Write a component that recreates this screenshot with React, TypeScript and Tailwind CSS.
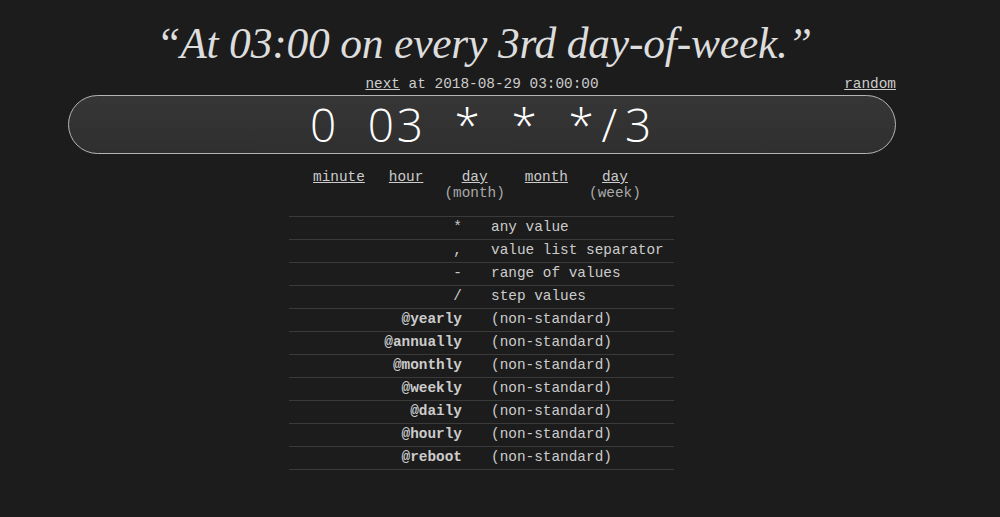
import React from "react";

const rows: [string, string, boolean][] = [
  ["*", "any value", false],
  [",", "value list separator", false],
  ["-", "range of values", false],
  ["/", "step values", false],
  ["@yearly", "(non-standard)", true],
  ["@annually", "(non-standard)", true],
  ["@monthly", "(non-standard)", true],
  ["@weekly", "(non-standard)", true],
  ["@daily", "(non-standard)", true],
  ["@hourly", "(non-standard)", true],
  ["@reboot", "(non-standard)", true],
];

export default function App() {
  const mono = { fontFamily: '"Liberation Mono", "Courier New", monospace' };
  return (
    <div className="min-h-[517px] w-full bg-[#1c1c1c] text-[#cccccc] overflow-hidden" style={mono}>
      <div className="ml-[68px] w-[828px] flex flex-col items-center pt-[18px]">
        <h1
          className="text-[43.5px] leading-[50px] italic text-[#dddddd] tracking-[-0.2px] ml-[4px]"
          style={{ fontFamily: '"Liberation Serif", Georgia, serif' }}
        >
          “At 03:00 on every 3rd day-of-week.”
        </h1>
        <div className="w-full relative h-[18px] mt-[7px] text-[14.4px] leading-[18px]">
          <div className="text-center">
            <span className="underline text-[#cccccc]">next</span> at 2018-08-29 03:00:00
          </div>
          <span className="absolute right-0 top-0 underline">random</span>
        </div>
        <div className="w-full h-[59px] mt-[2px] rounded-full border border-[#b5b5b5] bg-gradient-to-b from-[#363636] to-[#2f2f2f] flex items-center justify-center">
          <span
            className="text-[46px] font-light text-white tracking-[2.8px] leading-none mt-[-2px]"
            style={{ fontFamily: '"Open Sans", "DejaVu Sans", sans-serif', wordSpacing: "14px" }}
          >
            0 03 * * *<span className="px-[5px]">/</span>3
          </span>
        </div>
        <div className="self-start ml-[245px] flex mt-[15px] text-[14.4px] leading-[16px]">
          <div className="underline">minute</div>
          <div className="underline ml-[24px]">hour</div>
          <div className="flex flex-col items-center ml-[21px]">
            <span className="underline">day</span>
            <span className="text-[#aaaaaa]">(month)</span>
          </div>
          <div className="underline ml-[20px]">month</div>
          <div className="flex flex-col items-center ml-[21px]">
            <span className="underline">day</span>
            <span className="text-[#aaaaaa]">(week)</span>
          </div>
        </div>
        <div className="w-[385px] mt-[15px] border-t border-[#3a3a3a] text-[14.4px] ml-[-1px]">
          {rows.map(([k, v, b]) => (
            <div key={k} className="flex h-[23px] items-center border-b border-[#3a3a3a]">
              <div className={`w-[173px] text-right ${b ? "font-bold" : ""}`}>{k}</div>
              <div className="pl-[29px]">{v}</div>
            </div>
          ))}
        </div>
      </div>
    </div>
  );
}
